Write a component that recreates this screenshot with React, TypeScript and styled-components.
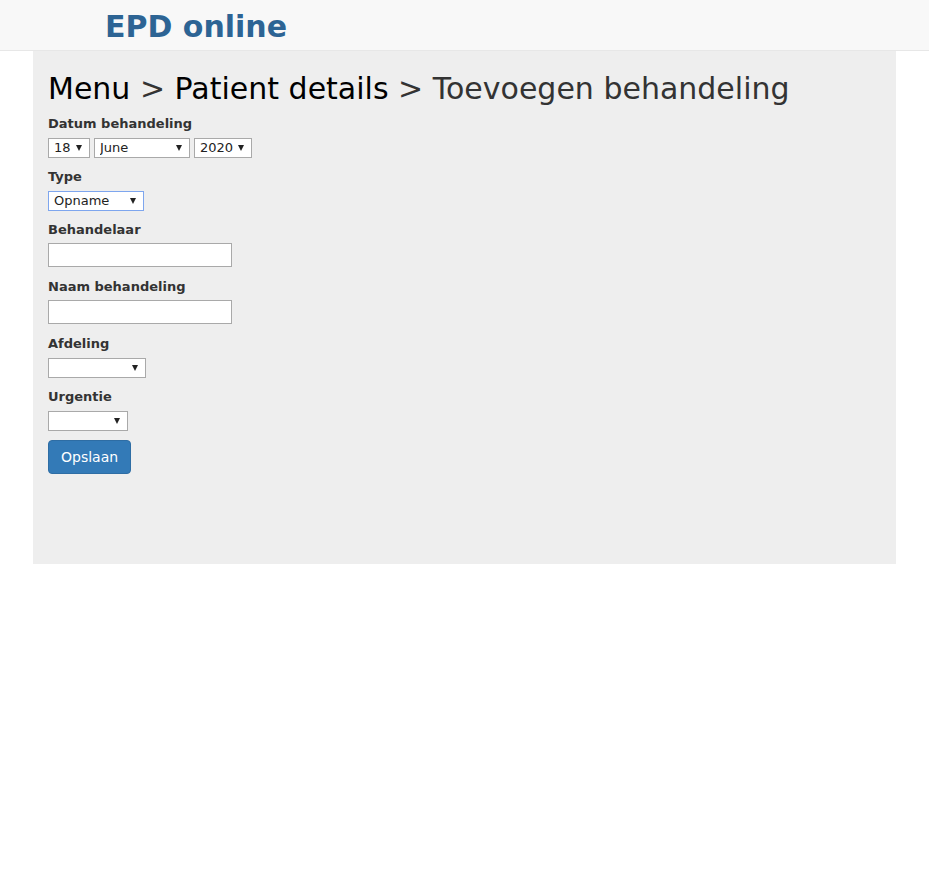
import React from "react";
import styled, { createGlobalStyle } from "styled-components";

const Global = createGlobalStyle`
  html, body { margin: 0; padding: 0; background: #fff; }
  body { font-family: "DejaVu Sans", Verdana, sans-serif; color: #333; }
`;

const Header = styled.header`
  height: 50px;
  background: #f8f8f8;
  border-bottom: 1px solid #e7e7e7;
  display: flex;
  align-items: center;
  padding-left: 105px;
`;

const Brand = styled.div`
  font-size: 30px;
  font-weight: bold;
  color: #2d6494;
  line-height: 1;
  margin-top: 4px;
`;

const Panel = styled.main`
  margin: 0 33px;
  background: #eeeeee;
  padding: 21px 15px 90px;
`;

const Title = styled.h1`
  margin: 0 0 9px;
  font-size: 30px;
  font-weight: normal;
  line-height: 33px;
  color: #333;
`;

const Crumb = styled.span`
  color: #000;
`;

const Group = styled.div`
  margin-bottom: 10px;
`;

const Label = styled.label`
  display: block;
  font-size: 13px;
  font-weight: bold;
  line-height: 18px;
  padding-top: 1px;
  margin-bottom: 4px;
  color: #333;
`;

const Row = styled.div`
  display: flex;
  gap: 4px;
`;

const SelectWrap = styled.span<{ $w: number }>`
  position: relative;
  display: inline-block;
  width: ${(p) => p.$w}px;
  height: 20px;
  &::after {
    content: "";
    position: absolute;
    right: 8px;
    top: 8px;
    border-left: 3.5px solid transparent;
    border-right: 3.5px solid transparent;
    border-top: 6px solid #222;
    pointer-events: none;
  }
`;

const NativeSelect = styled.select<{ $focus?: boolean }>`
  appearance: none;
  -webkit-appearance: none;
  box-sizing: border-box;
  width: 100%;
  height: 20px;
  margin: 0;
  padding: 0 0 0 5px;
  border: 1px solid ${(p) => (p.$focus ? "#7ea6ee" : "#a9a9a9")};
  border-radius: 0;
  background: #fff;
  font-family: "DejaVu Sans", Verdana, sans-serif;
  font-size: 13px;
  color: #222;
  outline: none;
`;

const TextInput = styled.input`
  box-sizing: border-box;
  display: block;
  width: 184px;
  height: 24px;
  margin: 0;
  border: 1px solid #a9a9a9;
  background: #fff;
  font-family: "DejaVu Sans", Verdana, sans-serif;
  font-size: 13px;
  padding: 0 4px;
`;

const Button = styled.button`
  box-sizing: border-box;
  height: 34px;
  padding: 0 12px;
  background: #337ab7;
  border: 1px solid #2e6da4;
  border-radius: 4px;
  color: #fff;
  font-family: "DejaVu Sans", Verdana, sans-serif;
  font-size: 14px;
  line-height: 1;
  cursor: pointer;
`;

type SelProps = { w: number; value: string; options: string[]; focus?: boolean };

const Select = ({ w, value, options, focus }: SelProps) => (
  <SelectWrap $w={w}>
    <NativeSelect $focus={focus} defaultValue={value}>
      {options.map((o) => (
        <option key={o} value={o}>
          {o}
        </option>
      ))}
    </NativeSelect>
  </SelectWrap>
);

export default function App() {
  return (
    <>
      <Global />
      <Header>
        <Brand>EPD online</Brand>
      </Header>
      <Panel>
        <Title>
          <Crumb>Menu</Crumb> &gt; <Crumb>Patient details</Crumb> &gt; Toevoegen behandeling
        </Title>
        <Group>
          <Label>Datum behandeling</Label>
          <Row>
            <Select w={42} value="18" options={["18"]} />
            <Select w={96} value="June" options={["June"]} />
            <Select w={58} value="2020" options={["2020"]} />
          </Row>
        </Group>
        <Group>
          <Label>Type</Label>
          <Select w={96} value="Opname" options={["Opname"]} focus />
        </Group>
        <Group>
          <Label>Behandelaar</Label>
          <TextInput type="text" />
        </Group>
        <Group>
          <Label>Naam behandeling</Label>
          <TextInput type="text" />
        </Group>
        <Group>
          <Label>Afdeling</Label>
          <Select w={98} value="" options={[""]} />
        </Group>
        <Group>
          <Label>Urgentie</Label>
          <Select w={80} value="" options={[""]} />
        </Group>
        <Button>Opslaan</Button>
      </Panel>
    </>
  );
}
